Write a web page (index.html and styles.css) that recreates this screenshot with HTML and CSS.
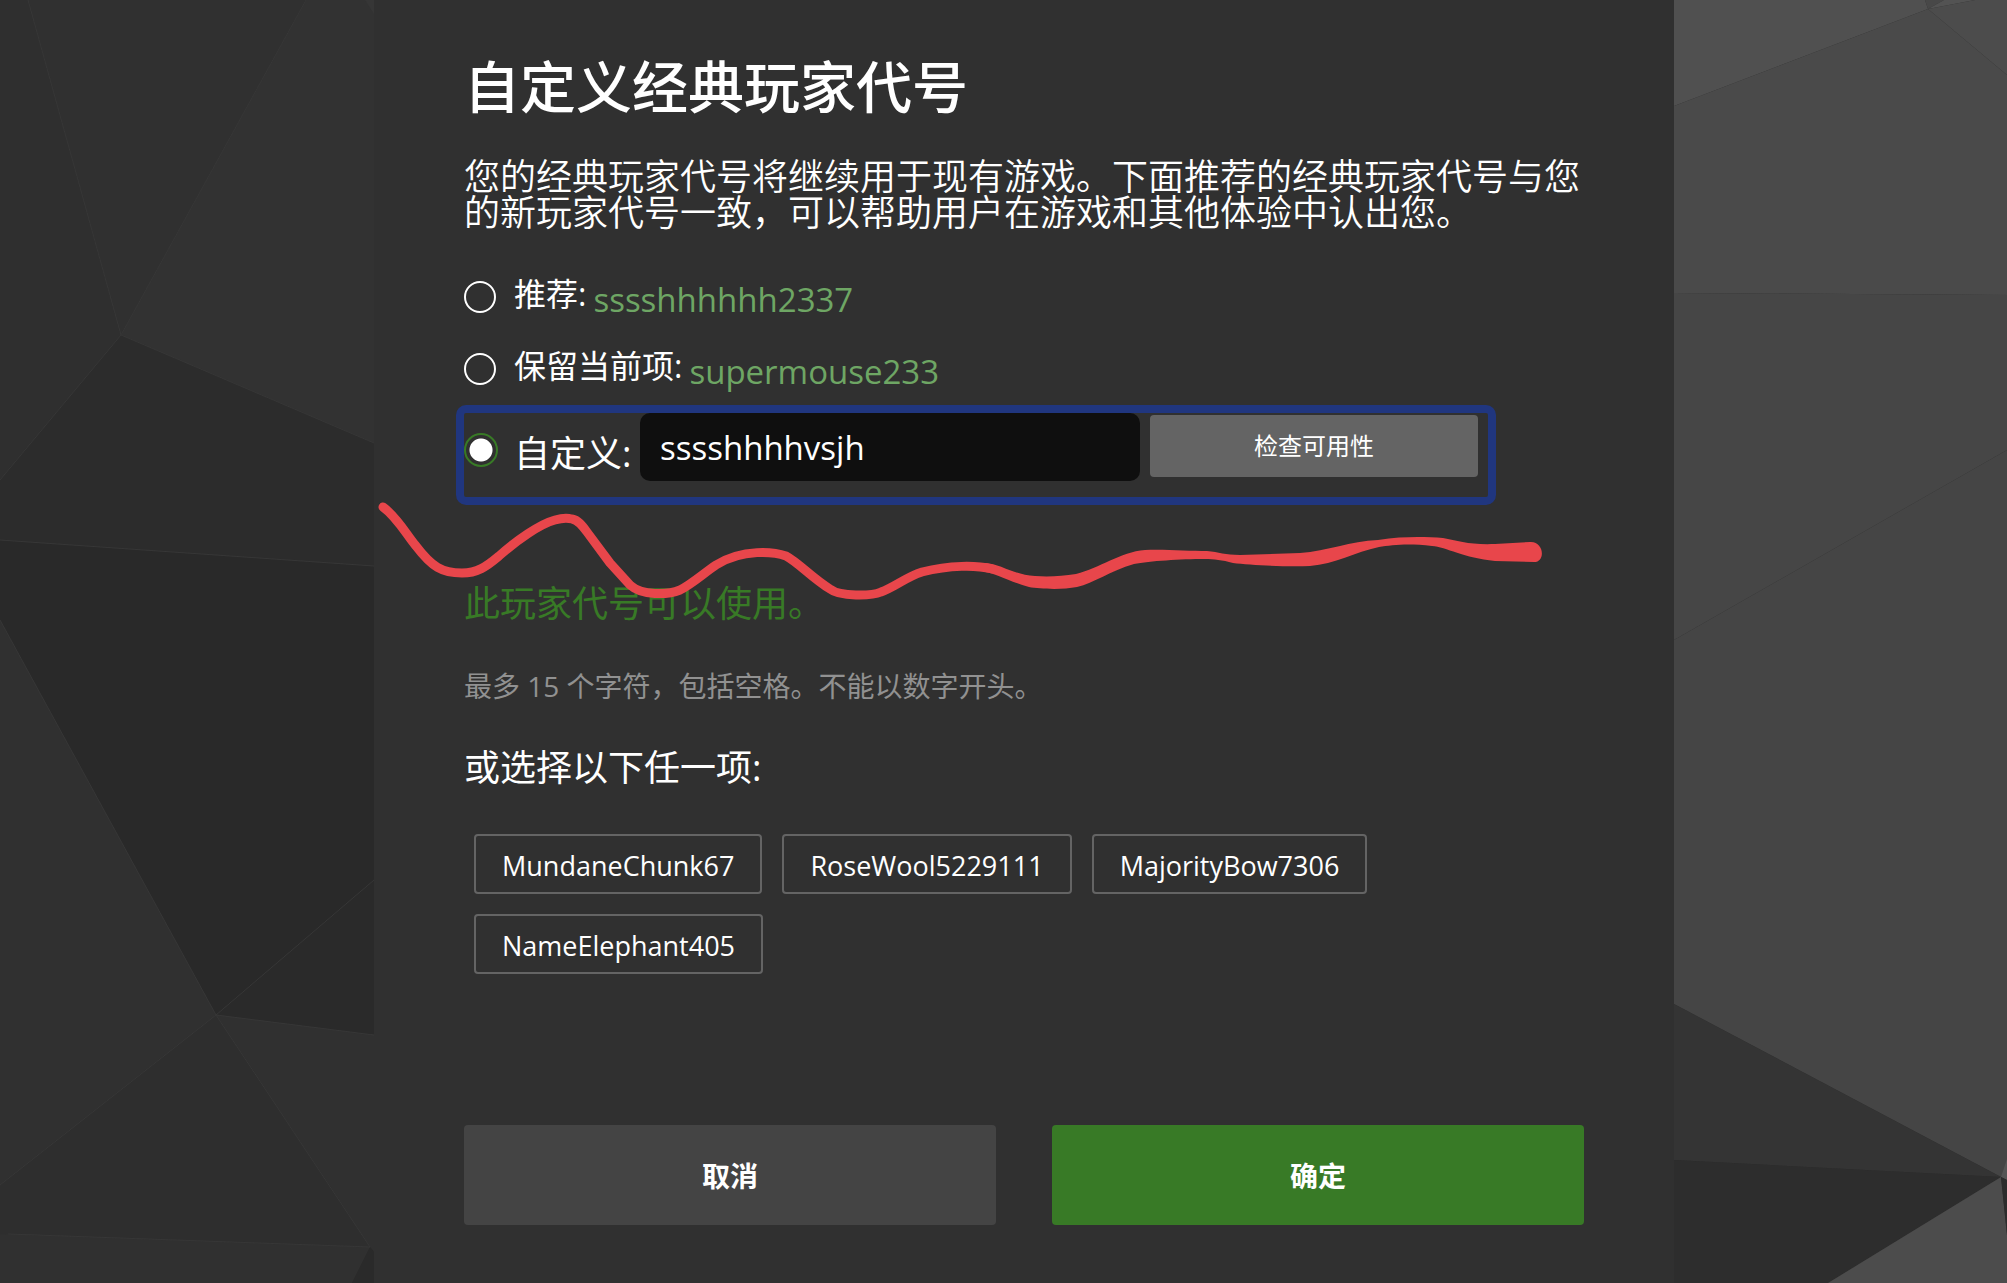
FILE: index.html
```html
<!DOCTYPE html>
<html lang="zh-CN">
<head>
<meta charset="utf-8">
<meta name="viewport" content="width=device-width, initial-scale=1">
<title>自定义经典玩家代号</title>
<link rel="stylesheet" href="styles.css">
</head>
<body>
<svg class="backdrop" viewBox="0 0 2007 1283" preserveAspectRatio="none" aria-hidden="true">
  <g stroke-width="1">
    <path fill="#2f2f2f" d="M0 0H28L121 335L0 480Z"/>
    <path fill="#303030" d="M28 0H306L121 335Z"/>
    <path fill="#323232" d="M306 0H374V443L121 335Z"/>
    <path fill="#363636" d="M365 0H374V14Z"/>
    <path fill="#2c2c2c" d="M0 480L121 335L374 443V566L0 540Z"/>
    <path fill="#292929" d="M0 540L374 566V880L216 1015L0 620Z"/>
    <path fill="#303030" d="M0 620L216 1015L0 1185Z"/>
    <path fill="#2a2a2a" d="M216 1015L374 880V1035Z"/>
    <path fill="#303030" d="M216 1015L374 1035V1252L370 1247Z"/>
    <path fill="#2e2e2e" d="M216 1015L370 1247L0 1234V1185Z"/>
    <path fill="#303030" d="M0 1234L370 1247L352 1283H0Z"/>
    <path fill="#2a2a2a" d="M370 1247L374 1252V1283H352Z"/>
    <path fill="none" stroke="#373737" d="M28 0L121 335L306 0M0 480L121 335L374 443M0 540L374 566M0 620L216 1015L374 880M0 1185L216 1015L370 1247L8 1234M216 1015L374 1035"/>
    <path fill="#505050" d="M1674 0H1925L1928 9L1674 106Z"/>
    <path fill="#484848" d="M1925 0H1944L1928 9Z"/>
    <path fill="#535353" d="M1944 0H1975L1928 9Z"/>
    <path fill="#4c4c4c" d="M1975 0H2007V75L1928 9Z"/>
    <path fill="#4a4a4a" d="M1674 106L1928 9L2007 75V295L1674 293Z"/>
    <path fill="#464646" d="M1674 293L2007 295V450L1674 640Z"/>
    <path fill="#454545" d="M1674 640L2007 450V1177H2001L1674 1004Z"/>
    <path fill="#343434" d="M1674 1004L2001 1177L1674 1160Z"/>
    <path fill="#2d2d2d" d="M1674 1160L2001 1177L1828 1283H1674Z"/>
    <path fill="#4c4c4c" d="M2001 1177L2007 1235V1283H1828Z"/>
    <path fill="#555" d="M2001 1177L2007 1159V1180Z"/>
    <path fill="#2c2c2c" d="M2001 1177L2007 1180V1235Z"/>
  </g>
</svg>

<main class="page">
  <form class="panel">
    <h1 class="title">自定义经典玩家代号</h1>
    <p class="intro">您的经典玩家代号将继续用于现有游戏。下面推荐的经典玩家代号与您的新玩家代号一致，可以帮助用户在游戏和其他体验中认出您。</p>

    <div class="choice">
      <input class="radio" type="radio" name="gamertag" id="tag-suggested">
      <label class="choice-label" for="tag-suggested">推荐: <span class="tag">sssshhhhhh2337</span></label>
    </div>
    <div class="choice">
      <input class="radio" type="radio" name="gamertag" id="tag-current">
      <label class="choice-label" for="tag-current">保留当前项: <span class="tag">supermouse233</span></label>
    </div>
    <div class="custom">
      <input class="radio" type="radio" name="gamertag" id="tag-custom" checked>
      <label class="custom-label" for="tag-custom">自定义:</label>
      <input class="custom-input" type="text" value="sssshhhhvsjh" aria-label="自定义玩家代号">
      <button class="check" type="button">检查可用性</button>
      <svg class="scribble" viewBox="376 500 1170 110" aria-hidden="true">
        <path fill="none" stroke="#e8464b" stroke-width="9" stroke-linecap="round" stroke-linejoin="round" d="M383 507C397 517 406 534 416 546C432 567 442 573 462 573C477 573 486 567 499 556C517 540 540 524 555 520C562 518 568 518 572 519C578 520 582 525 587 532L610 563L630 585C642 596 668 595 680 590C692 584 704 573 716 565C743 548 775 552 786 556C799 563 812 578 830 589C840 597 872 596 881 592C895 587 906 577 922 572C950 565 976 565 992 569"/>
        <path fill="#e8464b" d="M985 563C1001 564 1014 575 1035 576C1050 577 1062 576 1076 574C1100 568 1120 552 1145 550C1162 549 1190 551 1207 551C1219 552 1225 555 1240 555L1300 553C1328 551 1350 541 1378 540C1405 536 1426 537 1443 538C1458 541 1470 545 1495 544L1530 542C1544 541 1546 562 1534 562L1495 561C1464 558 1446 547 1432 546C1408 543 1392 545 1379 547C1355 552 1335 564 1310 566C1285 567 1250 565 1233 563C1222 560 1214 559 1205 559C1180 559 1150 561 1134 564C1110 571 1094 583 1077 587C1062 590 1040 589 1029 587C1010 582 995 573 985 572Z"/>
      </svg>
    </div>

    <p class="status" role="status">此玩家代号可以使用。</p>
    <p class="hint">最多 15 个字符，包括空格。不能以数字开头。</p>

    <h2 class="subtitle">或选择以下任一项:</h2>
    <div class="chips">
      <button class="chip" type="button">MundaneChunk67</button>
      <button class="chip" type="button">RoseWool5229111</button>
      <button class="chip" type="button">MajorityBow7306</button>
      <button class="chip" type="button">NameElephant405</button>
    </div>

    <div class="actions">
      <button class="action" type="button">取消</button>
      <button class="action action-primary" type="submit">确定</button>
    </div>
  </form>
</main>
</body>
</html>
```
FILE: styles.css
```css
* {
  box-sizing: border-box;
}

body {
  margin: 0;
  background: #2f2f2f;
  color: #fff;
  font-family: "Open Sans", "Noto Sans CJK SC", sans-serif;
}

button,
input {
  margin: 0;
  font-family: inherit;
  color: inherit;
}

.backdrop {
  position: fixed;
  inset: 0;
  z-index: -1;
  width: 100%;
  height: 100%;
}

.page {
  display: grid;
  grid-template-columns: 374fr minmax(0, 1300px) 333fr;
  min-height: 100vh;
}

.panel {
  grid-column: 2;
  display: flex;
  flex-direction: column;
  padding: 54px 90px 58px;
  background: #303030;
}

.title {
  margin: 0 0 41px;
  font-size: 56px;
  line-height: 64px;
  font-weight: 500;
}

.intro {
  margin: 0 0 30px;
  font-size: 36px;
  line-height: 36px;
  font-weight: 350;
}

.choice {
  display: flex;
  align-items: center;
  gap: 18px;
  height: 72px;
}

.radio {
  flex: none;
  appearance: none;
  width: 32px;
  height: 32px;
  border: 2px solid #fff;
  border-radius: 50%;
}

.radio:checked {
  width: 34px;
  height: 34px;
  border-color: #387a26;
  background: radial-gradient(circle, #fff 11px, transparent 12px);
}

.choice-label {
  display: flex;
  align-items: flex-start;
  gap: 7px;
  font-size: 32px;
  line-height: 40px;
}

.tag {
  padding-top: 6px;
  font-size: 33px;
  color: #6ea664;
}

.custom {
  position: relative;
  display: flex;
  align-items: flex-start;
  align-self: flex-start;
  margin: 0 -8px 75px;
  height: 100px;
  padding-right: 10px;
  border: 8px solid #20367f;
  border-radius: 10px;
}

.custom .radio {
  margin-top: 20px;
}

.custom-label {
  width: 142px;
  padding: 17px 0 0 16px;
  font-size: 36px;
  line-height: 48px;
}

.custom-input {
  width: 500px;
  height: 68px;
  margin-right: 10px;
  padding: 0 20px;
  border: 0;
  border-radius: 10px;
  background: #0f0f0f;
  font-size: 33px;
}

.check {
  width: 328px;
  height: 62px;
  margin-top: 2px;
  padding: 0 0 4px;
  border: 0;
  border-radius: 4px;
  background: #646464;
  font-size: 24px;
}

.scribble {
  position: absolute;
  top: 87px;
  left: -88px;
  width: 1170px;
  height: 110px;
  pointer-events: none;
}

.status {
  margin: 0 0 38px;
  font-size: 36px;
  line-height: 48px;
  color: #387a26;
}

.hint {
  margin: 0 0 38px;
  font-size: 28px;
  line-height: 40px;
  color: #919191;
}

.subtitle {
  margin: 0 0 42px;
  font-size: 36px;
  line-height: 48px;
  font-weight: 400;
}

.chips {
  display: flex;
  flex-wrap: wrap;
  gap: 20px;
  padding: 0 10px;
}

.chip {
  height: 60px;
  padding: 2px 26px 0;
  border: 2px solid #646464;
  border-radius: 4px;
  background: transparent;
  font-size: 27px;
}

.actions {
  display: grid;
  grid-template-columns: 1fr 1fr;
  gap: 56px;
  margin-top: auto;
}

.action {
  height: 100px;
  border: 0;
  border-radius: 4px;
  background: #444;
  font-size: 28px;
  font-weight: 700;
}

.action-primary {
  background: #387a26;
}
```
